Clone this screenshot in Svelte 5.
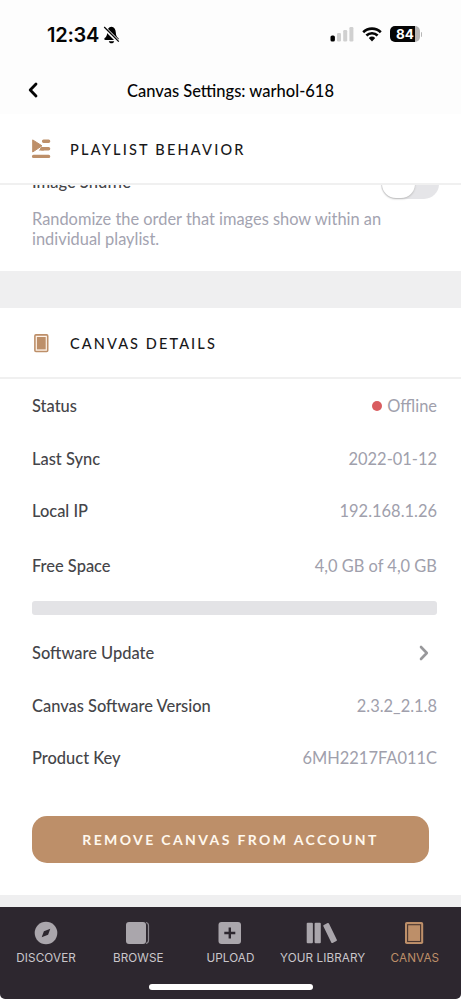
<script>
  const details = [
    { label: 'Status', value: 'Offline', dot: true },
    { label: 'Last Sync', value: '2022-01-12' },
    { label: 'Local IP', value: '192.168.1.26' },
    { label: 'Free Space', value: '4,0 GB of 4,0 GB', usage: 0 },
    { label: 'Software Update', link: true },
    { label: 'Canvas Software Version', value: '2.3.2_2.1.8' },
    { label: 'Product Key', value: '6MH2217FA011C' },
  ];

  const tabs = ['discover', 'browse', 'upload', 'your library', 'canvas'];
  let active = $state('canvas');
  let shuffle = $state(false);
</script>

<div class="screen">
  <div class="status-bar">
    <div class="clock">
      <span class="time">12:34</span>
      <svg width="17" height="18" viewBox="0 0 17 18">
        <path d="M8.4.8C5.6 1.2 4.3 3.2 4.2 6.4c-.1 3-1 4.3-2.5 5.7-.8.8-.5 2 .7 2h12.2c1.2 0 1.5-1.2.7-2-1.5-1.4-2.4-2.7-2.5-5.7C12.7 3.2 11.2 1.2 8.4.8z" />
        <path d="M5.8 15.2h5.4c-.4 1.5-1.3 2-2.7 2s-2.3-.5-2.7-2z" />
        <path class="cut" d="M.8 1.2l15 15" />
        <path class="slash" d="M1.2 1l14.6 14.6" />
      </svg>
    </div>
    <div class="indicators">
      <svg class="signal" width="24" height="16" viewBox="0 0 24 16">
        <rect x="0.5" y="9.5" width="4.4" height="6" rx="1.6" />
        <g class="dim">
          <rect x="7" y="7" width="4" height="8.5" rx="1.2" />
          <rect x="13.2" y="4" width="4" height="11.5" rx="1.2" />
          <rect x="19.4" y="1" width="4" height="14.5" rx="1.2" />
        </g>
      </svg>
      <svg class="wifi" width="20" height="15" viewBox="0 0 20 15">
        <path d="M1.2 5.2a12.6 12.6 0 0 1 17.6 0M4.4 8.5a8 8 0 0 1 11.2 0" />
        <path class="fan" d="M6.8 11a4.7 4.7 0 0 1 6.4 0L10 14.4z" />
      </svg>
      <div class="battery"><span>84</span></div>
      <i class="battery-cap"></i>
    </div>
  </div>

  <nav class="title-bar">
    <button class="back" aria-label="Back">
      <svg width="10" height="16" viewBox="0 0 10 16"><path d="M8 2L2.2 8 8 14" /></svg>
    </button>
    <h1>Canvas Settings: warhol-618</h1>
  </nav>

  <header class="section-header pinned">
    <svg width="20" height="20" viewBox="0 0 20 20">
      <path class="line" d="M12.6 2.3h5M10.8 9.8h6.8M2.6 17.4h15" />
      <path d="M7.6 11.6l3.2-3.400h2v3.400z" />
      <path class="play" d="M1.700.9L11 6.800 1.700 13z" />
    </svg>
    <h2>Playlist Behavior</h2>
  </header>

  <section class="shuffle">
    <div class="shuffle-row">
      <span class="label">Image Shuffle</span>
      <button class="toggle" class:on={shuffle} aria-label="Image Shuffle" onclick={() => (shuffle = !shuffle)}><i></i></button>
    </div>
    <p>Randomize the order that images show within an individual playlist.</p>
  </section>

  <header class="section-header">
    <svg width="20" height="20" viewBox="0 0 20 20">
      <rect x="3.9" y="1.9" width="12.8" height="16.6" rx="1" class="frame" />
      <rect x="5.9" y="4" width="8.8" height="12.4" />
    </svg>
    <h2>Canvas Details</h2>
  </header>

  <section class="details">
    {#each details as row}
      <div class="row" class:tall={row.usage !== undefined}>
        <span class="label">{row.label}</span>
        {#if row.link}
          <svg class="chevron" width="10" height="16" viewBox="0 0 10 16"><path d="M2 2l5.8 6L2 14" /></svg>
        {:else}
          <span class="value">
            {#if row.dot}<i class="dot"></i>{/if}{row.value}
          </span>
        {/if}
      </div>
      {#if row.usage !== undefined}
        <div class="meter"><i style="width: {row.usage}%"></i></div>
      {/if}
    {/each}
    <button class="remove">Remove canvas from account</button>
  </section>

  <footer>
    <div class="tabs">
      {#each tabs as tab}
        <button class="tab" class:active={active === tab} onclick={() => (active = tab)}>
          <svg width="32" height="24" viewBox="0 0 32 24">
            {#if tab === 'discover'}
              <circle cx="16" cy="12" r="11.3" />
              <path class="ink" d="M20.3 7.8l-2.2 6-6.4 2.4 2.2-6z" />
            {:else if tab === 'browse'}
              <rect x="4" y="1" width="20" height="22" rx="3" />
              <path class="edge" d="M24 1.5c1.8.4 2.5 1.5 2.5 3v15c0 1.6-.8 2.6-2.5 3" />
            {:else if tab === 'upload'}
              <rect x="4.5" y="1" width="22.5" height="22" rx="3" />
              <path class="plus" d="M15.8 6.5v11M10.3 12h11" />
            {:else if tab === 'your library'}
              <rect x="-0.3" y="1.8" width="6.2" height="20.4" rx="1" />
              <rect x="7.6" y="1.8" width="6.2" height="20.4" rx="1" />
              <rect x="20" y="2" width="6.2" height="20" rx="1" transform="rotate(-26 23.1 12)" />
            {:else}
              <rect x="6" y="1" width="18.2" height="22" rx="1.8" />
              <rect class="mat" x="8.6" y="3.7" width="13" height="16.8" />
            {/if}
          </svg>
          <span>{tab}</span>
        </button>
      {/each}
    </div>
    <div class="home"></div>
  </footer>
</div>

<style>
  :global(body) {
    margin: 0;
    background: #fff;
  }

  .screen {
    width: 461px;
    height: 999px;
    overflow: hidden;
    display: flex;
    flex-direction: column;
    background: #fff;
    font-family: Lato, sans-serif;
    color: #18181a;
  }

  .screen > * {
    box-sizing: border-box;
    flex-shrink: 0;
  }

  svg {
    display: block;
    overflow: visible;
  }

  button {
    padding: 0;
    border: 0;
    background: none;
    font: inherit;
    color: inherit;
    cursor: pointer;
  }

  h1,
  h2,
  p {
    margin: 0;
    font-weight: 500;
  }

  .status-bar {
    height: 68px;
    padding: 0 38px 0 47px;
    display: flex;
    align-items: center;
    justify-content: space-between;
    background: #fdfdfd;
    font-family: Inter, sans-serif;
    color: #050505;
  }

  .clock,
  .indicators {
    display: flex;
    align-items: center;
  }

  .clock {
    gap: 4px;
    padding-top: 1px;
  }

  .time {
    font-size: 20px;
    font-weight: 600;
    letter-spacing: -0.25px;
  }

  .cut {
    stroke: #fdfdfd;
    stroke-width: 3.6;
  }

  .slash {
    stroke: #050505;
    stroke-width: 1.3;
  }

  .dim {
    fill: #d0d0d0;
  }

  .indicators {
    margin-right: 1px;
  }

  .wifi {
    margin-left: 8px;
    fill: none;
    stroke: #050505;
    stroke-width: 2.6;
  }

  .fan {
    fill: #050505;
    stroke: none;
  }

  .battery {
    width: 30px;
    height: 16px;
    margin-left: 8px;
    border-radius: 5px;
    background: linear-gradient(90deg, #050505 25px, #b6b6b6 25px);
    color: #fff;
    font-size: 13.5px;
    font-weight: 700;
    line-height: 16px;
    text-align: center;
  }

  .battery-cap {
    width: 1px;
    height: 5px;
    margin-left: 1px;
    background: #b6b6b6;
    border-radius: 0 2px 2px 0;
  }

  .title-bar {
    height: 46px;
    padding: 0 28px;
    display: grid;
    grid-template-columns: 20px 1fr 20px;
    align-items: center;
    background: #fdfdfd;
  }

  .title-bar h1 {
    font-size: 16.5px;
    line-height: 44px;
    padding-bottom: 1px;
    text-align: center;
    color: #050505;
  }

  .back {
    padding-bottom: 3px;
  }

  .back path,
  .chevron path {
    fill: none;
    stroke: #050505;
    stroke-width: 2.8;
    stroke-linecap: round;
    stroke-linejoin: round;
  }

  .section-header {
    height: 71px;
    padding: 0 31px;
    display: flex;
    align-items: center;
    gap: 19px;
    border-bottom: 2px solid #f0f0f0;
    background: #fff;
    fill: #bd8f69;
  }

  .section-header h2 {
    padding-top: 2px;
    font-size: 14.5px;
    letter-spacing: 2.1px;
    text-transform: uppercase;
  }

  .section-header.pinned {
    padding-top: 1px;
  }

  .pinned h2 {
    padding-top: 1px;
    letter-spacing: 2.2px;
  }

  .line {
    stroke: #bd8f69;
    stroke-width: 3.4;
    stroke-linecap: round;
  }

  .play {
    stroke: #bd8f69;
    stroke-linejoin: round;
  }

  .frame {
    fill: #fff3e9;
    stroke: #bd8f69;
    stroke-width: 1.6;
  }

  .label {
    padding-bottom: 1px;
    color: #454549;
    font-weight: 500;
  }

  .shuffle {
    height: 123px;
    padding: 0 24px 0 32px;
    border-bottom: 37px solid #efeff0;
    overflow: hidden;
    font-size: 16.5px;
  }

  .shuffle-row {
    height: 30px;
    margin-top: -16px;
    display: flex;
    align-items: center;
    justify-content: space-between;
  }

  .shuffle-row .label {
    padding-bottom: 5px;
  }

  .toggle {
    width: 58px;
    height: 30px;
    margin-right: -2px;
    padding: 1px;
    display: flex;
    border-radius: 15px;
    background: #e5e5e8;
  }

  .toggle i {
    width: 33px;
    height: 28px;
    border-radius: 14px;
    background: #fff;
    box-shadow: 0 1px 2px #bbb;
  }

  .toggle.on {
    justify-content: flex-end;
    background: #bd8f69;
  }

  .shuffle p {
    width: 375px;
    margin-top: 10px;
    font-size: 16.4px;
    line-height: 20px;
    font-weight: 400;
    color: #a3a3b0;
  }

  .details {
    height: 528px;
    padding: 1px 24px 0 32px;
    border-bottom: 12px solid #efeff0;
    font-size: 16.45px;
  }

  .row {
    height: 52.7px;
    display: flex;
    align-items: center;
    justify-content: space-between;
  }

  .row.tall {
    height: 56px;
  }

  .value {
    padding-bottom: 1px;
    display: flex;
    align-items: center;
    color: #a0a0ac;
  }

  .dot {
    width: 10px;
    height: 10px;
    margin-right: 5px;
    border-radius: 50%;
    background: #d95c5f;
  }

  .chevron {
    margin-right: 8px;
  }

  .chevron path {
    stroke: #98989b;
    stroke-width: 2.6;
  }

  .meter {
    height: 14px;
    margin: 6.5px 0 12.5px;
    border-radius: 3px;
    overflow: hidden;
    background: #e3e3e6;
  }

  .meter i {
    display: block;
    height: 100%;
    background: #bd8f69;
  }

  .remove {
    display: block;
    width: 397px;
    height: 47px;
    margin-top: 31px;
    border-radius: 15px;
    background: #bd8f69;
    color: #fff8ee;
    font-size: 14px;
    font-weight: 700;
    letter-spacing: 2.38px;
    text-transform: uppercase;
  }

  footer {
    height: 92px;
    padding-top: 14px;
    border-radius: 0 0 5px 5px;
    background: #2d272f;
  }

  .tabs {
    display: grid;
    grid-template-columns: repeat(5, 1fr);
  }

  .tab {
    display: flex;
    flex-direction: column;
    align-items: center;
    gap: 6px;
    color: #c9c6cb;
    fill: #aaa6ac;
    font-family: Inter, sans-serif;
    font-size: 11.7px;
    letter-spacing: 0.1px;
    line-height: 14px;
    text-transform: uppercase;
    white-space: nowrap;
  }

  .tab.active {
    color: #bd8f69;
    fill: #bd8f69;
  }

  .ink {
    fill: #2d272f;
  }

  .edge {
    fill: none;
    stroke: #8d8990;
    stroke-width: 1.2;
  }

  .plus {
    stroke: #2d272f;
    stroke-width: 2.4;
  }

  .mat {
    stroke: #4a3630;
    stroke-width: 1.1;
  }

  .home {
    width: 164px;
    height: 6px;
    margin: 19px auto 0;
    border-radius: 3px;
    background: #fff;
  }
</style>
